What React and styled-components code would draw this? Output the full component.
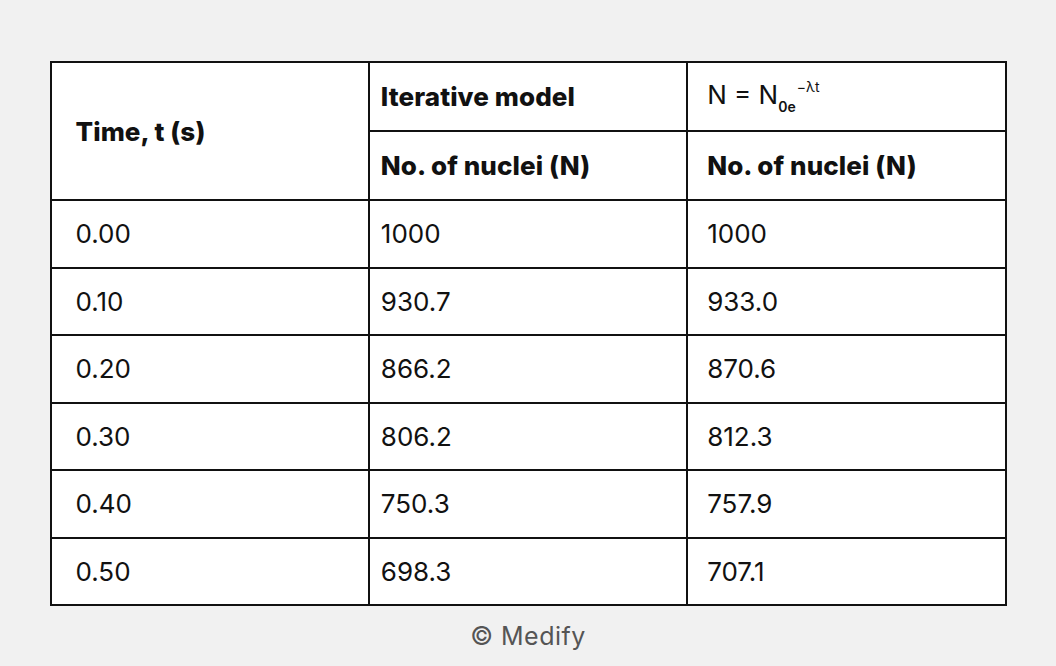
import React from "react"
import styled, { createGlobalStyle } from "styled-components"

const GlobalStyle = createGlobalStyle`
	html, body {
		margin: 0;
		padding: 0;
		background: #f1f1f1;
		font-family: Inter, "Liberation Sans", sans-serif;
		color: #111;
	}
`

const Page = styled.div`
	display: flex;
	flex-direction: column;
	align-items: center;
	padding-top: 61px;
	height: 666px;
	box-sizing: border-box;
`

const Table = styled.table`
	width: 957px;
	border-collapse: collapse;
	table-layout: fixed;
	background: #fff;
	border: 2px solid #111;
`

const Cell = styled.td`
	border: 2px solid #111;
	height: ${(p) => p.$h || 66}px;
	padding: 0 0 0 ${(p) => p.$pad}px;
	font-size: 26px;
	font-weight: ${(p) => (p.$bold ? 800 : 400)};
	letter-spacing: ${(p) => (p.$bold ? "0.1px" : "0")};
	vertical-align: middle;
	box-sizing: border-box;
`

const Sub = styled.sub`
	font-size: 14px;
	font-weight: 600;
	vertical-align: -8px;
`

const Sup = styled.sup`
	font-size: 14px;
	vertical-align: 12px;
	margin-left: 1px;
`

const Footer = styled.div`
	margin-top: 15px;
	font-size: 25px;
	color: #555;
	letter-spacing: 0.5px;
`

const pads = [24, 11, 19]

const rows = [
	["0.00", "1000", "1000"],
	["0.10", "930.7", "933.0"],
	["0.20", "866.2", "870.6"],
	["0.30", "806.2", "812.3"],
	["0.40", "750.3", "757.9"],
	["0.50", "698.3", "707.1"],
]

const App = () => (
	<>
		<GlobalStyle />
		<Page>
			<Table>
				<tbody>
					<tr>
						<Cell rowSpan={2} $pad={pads[0]} $bold>
							Time, t (s)
						</Cell>
						<Cell $pad={pads[1]} $h={69} $bold>
							Iterative model
						</Cell>
						<Cell $pad={pads[2]} $h={69}>
							N = N<Sub>0e</Sub>
							<Sup>−λt</Sup>
						</Cell>
					</tr>
					<tr>
						<Cell $pad={pads[1]} $h={69} $bold>
							No. of nuclei (N)
						</Cell>
						<Cell $pad={pads[2]} $h={69} $bold>
							No. of nuclei (N)
						</Cell>
					</tr>
					{rows.map((r) => (
						<tr key={r[0]}>
							{r.map((v, i) => (
								<Cell key={i} $pad={pads[i]} $h={67.5}>
									{v}
								</Cell>
							))}
						</tr>
					))}
				</tbody>
			</Table>
			<Footer>© Medify</Footer>
		</Page>
	</>
)

export default App
